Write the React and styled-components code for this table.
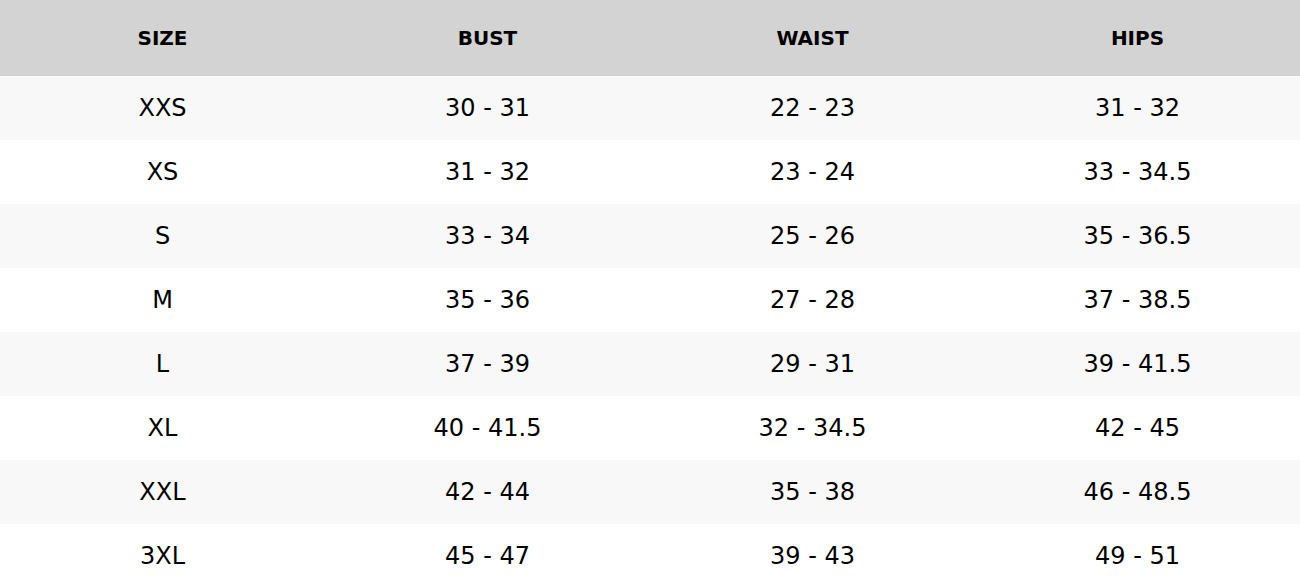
import React from 'react';
import styled, { createGlobalStyle } from 'styled-components';

const GlobalStyle = createGlobalStyle`
    html, body {
        margin: 0;
        padding: 0;
        background: #ffffff;
        font-family: "DejaVu Sans", "Liberation Sans", sans-serif;
        color: #000000;
    }
`

const columns = ["SIZE", "BUST", "WAIST", "HIPS"]

const sizes = [
    ["XXS", "30 - 31", "22 - 23", "31 - 32"],
    ["XS", "31 - 32", "23 - 24", "33 - 34.5"],
    ["S", "33 - 34", "25 - 26", "35 - 36.5"],
    ["M", "35 - 36", "27 - 28", "37 - 38.5"],
    ["L", "37 - 39", "29 - 31", "39 - 41.5"],
    ["XL", "40 - 41.5", "32 - 34.5", "42 - 45"],
    ["XXL", "42 - 44", "35 - 38", "46 - 48.5"],
    ["3XL", "45 - 47", "39 - 43", "49 - 51"],
]

function App() {
    return (
        <>
            <GlobalStyle />
            <Table>
                <HeadRow>
                    {columns.map((c) => (
                        <HeadCell key={c}>{c}</HeadCell>
                    ))}
                </HeadRow>
                {sizes.map((row, i) => (
                    <Row key={row[0]} $striped={i % 2 === 0}>
                        {row.map((v, j) => (
                            <Cell key={j}>{v}</Cell>
                        ))}
                    </Row>
                ))}
            </Table>
        </>
    );
}

const Table = styled.div`
    width: 1300px;
    display: flex;
    flex-direction: column;
`

const HeadRow = styled.div`
    display: grid;
    grid-template-columns: repeat(4, 1fr);
    height: 76px;
    background-color: #d3d3d3;
`

const HeadCell = styled.div`
    display: flex;
    align-items: center;
    justify-content: center;
    font-size: 20px;
    font-weight: bold;
`

const Row = styled.div`
    display: grid;
    grid-template-columns: repeat(4, 1fr);
    height: 64px;
    background-color: ${(p) => (p.$striped ? '#f8f8f8' : '#ffffff')};
`

const Cell = styled.div`
    display: flex;
    align-items: center;
    justify-content: center;
    font-size: 24px;
`

export default App;
